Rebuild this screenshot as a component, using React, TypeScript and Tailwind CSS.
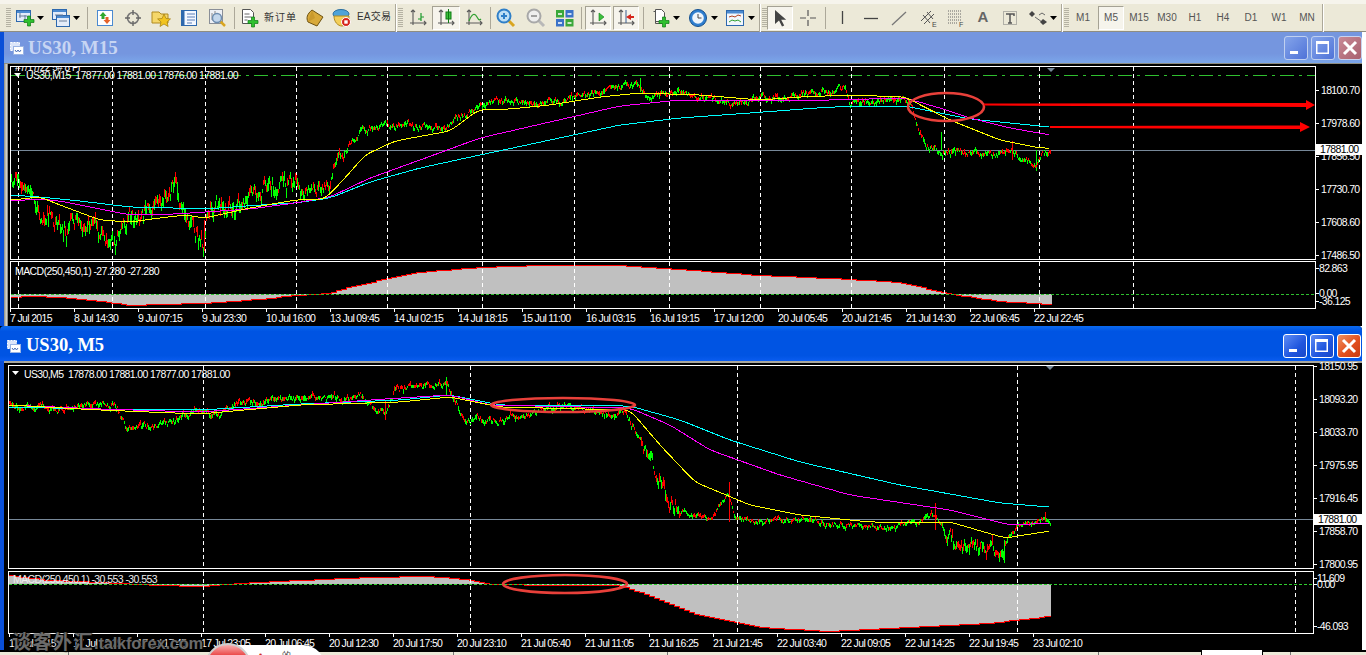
import React from "react";

type P = [number, number];

const interp = (pts: P[], x: number) => {
  if (x <= pts[0][0]) return pts[0][1];
  for (let i = 1; i < pts.length; i++) {
    if (x <= pts[i][0]) {
      const [x0, y0] = pts[i - 1];
      const [x1, y1] = pts[i];
      return y0 + ((y1 - y0) * (x - x0)) / (x1 - x0);
    }
  }
  return pts[pts.length - 1][1];
};

const rng = (seed: number) => () => {
  seed |= 0;
  seed = (seed + 0x6d2b79f5) | 0;
  let t = Math.imul(seed ^ (seed >>> 15), 1 | seed);
  t = (t + Math.imul(t ^ (t >>> 7), 61 | t)) ^ t;
  return ((t ^ (t >>> 14)) >>> 0) / 4294967296;
};

const candles = (
  path: P[],
  amp: (x: number) => number,
  seed: number,
  spikes: [number, number, number, string][]
) => {
  const r = rng(seed);
  let g = "";
  let red = "";
  let n = 0;
  for (let x = path[0][0]; x <= path[path.length - 1][0]; x++) {
    const a = amp(x);
    n = 0.72 * n + (r() - 0.5) * a;
    const c = interp(path, x) + n;
    const o = c + (r() - 0.42) * a * 0.7;
    const hi = Math.min(o, c) - r() * a * 0.3;
    const lo = Math.max(o, c) + r() * a * 0.3;
    const seg = `M${x + 0.5} ${hi.toFixed(0)}V${(lo + 1).toFixed(0)}`;
    if (c < o) g += seg;
    else red += seg;
  }
  spikes.forEach(([x, a, b, col]) => {
    const seg = `M${x + 0.5} ${a}V${b}`;
    if (col === "g") g += seg;
    else red += seg;
  });
  return { g, red };
};

const hist = (pts: P[], zero: number, step: number, end: number) => {
  let fill = `M${pts[0][0]} ${zero}`;
  let line = "";
  for (let x = pts[0][0]; x < end; x += step) {
    const nx = Math.min(x + step, end);
    const y = Math.round(interp(pts, x + step / 2));
    fill += `L${x} ${y}L${nx} ${y}`;
    line += `${line ? "L" : "M"}${x} ${y}L${nx} ${y}`;
  }
  fill += `L${end} ${zero}Z`;
  return { fill, line };
};

const smooth = (pts: P[], w: number) => {
  const out: string[] = [];
  const a = pts[0][0];
  const b = pts[pts.length - 1][0];
  for (let x = a; x <= b; x += 2) {
    let s = 0;
    let c = 0;
    for (let d = -w; d <= w; d += 2) {
      const q = Math.max(a, Math.min(b, x + d));
      s += interp(pts, q);
      c++;
    }
    out.push(`${x},${(s / c).toFixed(1)}`);
  }
  return out.join(" ");
};

const c1Path: P[] = [[11,177],[20,180],[30,190],[36,208],[50,218],[62,232],[75,222],[90,226],[105,243],[115,245],[128,228],[145,218],[160,205],[175,190],[185,212],[195,228],[204,240],[207,214],[225,205],[240,198],[260,190],[280,183],[295,178],[300,192],[315,190],[330,185],[335,160],[345,148],[360,130],[375,127],[390,124],[420,125],[445,128],[455,120],[470,108],[485,103],[500,100],[530,103],[560,100],[590,92],[625,85],[640,84],[646,95],[680,92],[700,97],[735,105],[760,98],[800,94],[845,88],[850,101],[900,100],[910,103],[918,125],[925,146],[940,150],[960,152],[1000,153],[1012,146],[1020,160],[1035,165],[1040,155],[1050,150]];
const c1Cyan: P[] = [[11,195],[40,197],[80,201],[130,207],[175,208],[205,209],[260,205],[295,203],[330,198],[370,182],[420,168],[480,155],[550,140],[620,125],[680,118],[750,113],[830,107],[905,106],[940,113],[970,119],[1010,123],[1050,127]];
const c1Mag: P[] = [[11,201],[40,199],[60,201],[90,207],[130,215],[175,214],[205,212],[250,209],[295,203],[330,197],[370,178],[420,160],[480,138],[550,122],[620,106],[680,100],[750,100],[830,100],[905,98],[940,108],[970,118],[1010,128],[1050,135]];
const c1Yel: P[] = [[11,200],[40,197],[60,205],[100,220],[130,222],[160,218],[185,215],[205,218],[250,208],[295,200],[325,199],[345,178],[365,155],[395,141],[450,131],[478,110],[510,109],[550,105],[600,97],[640,93],[700,95],[760,100],[800,97],[850,95],[905,97],[950,120],[1000,140],[1040,148],[1050,148]];
const c2Path: P[] = [[9,405],[50,408],[90,405],[115,402],[125,425],[150,428],[175,420],[195,410],[220,412],[240,403],[300,398],[360,398],[385,412],[395,390],[420,386],[445,382],[455,400],[465,420],[490,420],[520,417],[540,408],[570,406],[600,412],[625,412],[640,440],[655,470],[670,505],[690,512],[710,518],[728,495],[735,518],[760,520],[800,520],[850,525],[890,527],[920,520],[935,512],[945,530],[955,545],[985,545],[1000,553],[1008,535],[1020,525],[1045,517],[1050,520]];
const c2Cyan: P[] = [[9,407],[100,409],[200,410],[300,404],[400,400],[450,395],[500,405],[630,406],[680,420],[730,440],[800,462],[900,485],[1000,503],[1050,507]];
const c2Mag: P[] = [[9,405],[100,409],[200,412],[300,405],[400,398],[450,395],[490,405],[630,408],[670,425],[710,450],[780,475],[850,495],[950,510],[1010,525],[1050,523]];
const c2Yel: P[] = [[9,405],[100,410],[200,414],[300,405],[400,402],[450,397],[500,407],[630,410],[660,445],[695,482],[750,505],[800,515],[870,522],[950,522],[1005,538],[1050,531]];
const m1: P[] = [[11,297],[30,296],[60,297],[100,301],[130,305],[160,304],[205,303],[260,299],[296,295],[330,293],[350,287],[380,280],[420,272],[480,267],[540,265],[620,265],[680,269],[760,275],[850,279],[900,282],[935,290],[960,295],[1000,301],[1050,304]];
const m2: P[] = [[9,575],[50,580],[100,582],[160,585],[200,586],[240,583],[300,580],[370,577],[430,576],[465,579],[490,584],[560,585],[620,585],[650,595],[700,615],[760,627],[830,631],[906,627],[990,623],[1050,616]];

const c1C = candles(c1Path, (x) => (x < 300 ? 15 : x < 345 ? 10 : 5), 11, [[941,132,150,"g"],[1012,141,160,"r"],[1036,150,171,"g"],[177,182,200,"g"],[204,220,250,"r"],[640,78,92,"g"]]);
const c2C = candles(c2Path, (x) => (x > 640 && x < 680 ? 12 : x > 940 && x < 1005 ? 11 : x > 680 ? 4 : 5), 23, [[729,482,522,"r"],[935,503,530,"r"],[1004,540,563,"g"],[1045,512,522,"r"],[446,377,395,"g"],[385,400,420,"r"]]);
const h1 = hist(m1, 294, 5, 1052);
const h2 = hist(m2, 584, 5, 1051);

const ui = "font-['Liberation_Sans',Arial,sans-serif]";

const Ma = ({ pts, color, w = 8 }: { pts: P[]; color: string; w?: number }) => (
  <polyline points={smooth(pts, w)} fill="none" stroke={color} strokeWidth={1} shapeRendering="crispEdges" />
);

const Dash = ({ xs, y1, y2 }: { xs: number[]; y1: number; y2: number }) => (
  <>
    {xs.map((x) => (
      <line key={x} x1={x + 0.5} x2={x + 0.5} y1={y1} y2={y2} stroke="#fff" strokeDasharray="4 3" shapeRendering="crispEdges" />
    ))}
  </>
);

const Tag = ({ y, top, text, x = 4 }: { y: number; top: number; text: string; x?: number }) => (
  <div className="absolute flex items-center" style={{ top: y - top - 6, left: 0 }}>
    <span className="h-px w-[3px] bg-white" />
    <span className="text-[10.5px] leading-[12px] tracking-[-0.66px] text-white" style={{ marginLeft: x - 3 }}>{text}</span>
  </div>
);

const Price = ({ y, top, text }: { y: number; top: number; text: string }) => (
  <div className="absolute left-0 flex h-[11px] w-full items-center bg-white pl-[4px] text-[10.5px] tracking-[-0.66px] text-black" style={{ top: y - top - 5 }}>
    {text}
  </div>
);

const TimeRow = ({ labels, cls }: { labels: string[]; cls: string }) => (
  <div className={"flex " + cls}>
    {labels.map((l) => (
      <div key={l} className="relative w-[64px] shrink-0">
        <span className="block h-[3px] w-px bg-white" />
        <span className="block whitespace-nowrap text-[10.5px] leading-[12px] tracking-[-0.66px] text-white">{l}</span>
      </div>
    ))}
  </div>
);

const TitleBtn = ({ kind, active }: { kind: "min" | "max" | "close"; active: boolean }) => {
  const base = "flex h-[24px] w-[24px] items-center justify-center rounded-[3px] border ";
  const skin =
    kind === "close"
      ? active
        ? "border-white bg-[linear-gradient(135deg,#f0905f,#e2501f_55%,#c83a12)]"
        : "border-[#c8d4f0] bg-[linear-gradient(135deg,#c98a96,#a8606e)]"
      : active
      ? "border-white bg-[linear-gradient(135deg,#5f8df5,#1f55de_60%,#1a48c8)]"
      : "border-[#c0d0f0] bg-[linear-gradient(135deg,#84a4ea,#4f73d8)]";
  return (
    <div className={base + skin}>
      <svg width="18" height="18" viewBox="0 0 18 18">
        {kind === "min" && <rect x="3" y="12" width="8" height="3" fill="#fff" />}
        {kind === "max" && <path d="M2 2h13v13H2zM3.5 5v8.5h10V5z" fill="#fff" fillRule="evenodd" />}
        {kind === "close" && <path d="M3 3l12 12M15 3L3 15" stroke="#fff" strokeWidth="3" />}
      </svg>
    </div>
  );
};

const WinIcon = () => (
  <svg width="14" height="14" viewBox="0 0 14 14" className="shrink-0">
    <rect x="0.5" y="1.5" width="9" height="8" fill="#dce6fa" stroke="#fff" strokeDasharray="2 1" />
    <rect x="3.5" y="5.5" width="10" height="8" fill="#fff" stroke="#9ab4e4" />
    <path d="M5 9l1.5 2 1.5-2 1.5 2 1.5-2" fill="none" stroke="#4a6fb8" />
  </svg>
);

const Btn = ({ cls, active, children }: { cls: string; active?: boolean; children?: React.ReactNode }) => (
  <div
    className={
      "flex h-[24px] shrink-0 items-center justify-center " +
      cls +
      (active ? " border border-t-[#a5a294] border-l-[#a5a294] border-r-white border-b-white bg-[#f6f4ec]" : "")
    }
  >
    {children}
  </div>
);

const Sep = ({ cls }: { cls: string }) => (
  <div className={"flex h-[22px] shrink-0 justify-center " + cls}>
    <span className="w-px bg-[#aca899]" />
  </div>
);

const Grip = () => (
  <div className="h-[20px] w-[5px] shrink-0 bg-[repeating-linear-gradient(to_bottom,#b5b2a3_0,#b5b2a3_1px,#ece9d8_1px,#ece9d8_2px)]" />
);

const End = () => <div className="mx-[1px] h-[28px] w-[2px] shrink-0 border-l border-r border-l-[#aca899] border-r-white" />;

const Caret = () => (
  <svg width="7" height="4" viewBox="0 0 7 4" className="shrink-0">
    <path d="M0 0h7L3.5 4z" fill="#000" />
  </svg>
);

const Ico = ({ children }: { children: React.ReactNode }) => (
  <svg width="20" height="20" viewBox="0 0 20 20" className="shrink-0">
    {children}
  </svg>
);

const Cross = ({ x, y }: { x: number; y: number }) => (
  <path transform={`translate(${x} ${y})`} d="M3.5 0h3v3.5H10v3H6.5V10h-3V6.5H0v-3h3.5z" fill="#2fc02f" stroke="#0d7a14" strokeWidth="0.7" />
);

const Axes = ({ c = "#5a5a5a" }: { c?: string }) => (
  <path d="M5 2v15M2 15h16M3 4l2-2 2 2M16 13l2 2-2 2" fill="none" stroke={c} strokeWidth="1.1" />
);

const Win = ({ x, y, w, h }: { x: number; y: number; w: number; h: number }) => (
  <g>
    <rect x={x + 0.5} y={y + 0.5} width={w} height={h} fill="#e3ecf9" stroke="#2d68ad" />
    <rect x={x + 1} y={y + 1} width={w - 1} height="2" fill="#4b8ad0" />
  </g>
);

const Glass = ({ fill = "#bfe0f5", ring = "#2f7fc8", grip = "#d9a520" }: { fill?: string; ring?: string; grip?: string }) => (
  <>
    <path d="M12 12l6 6" stroke={grip} strokeWidth="3" />
    <circle cx="8" cy="8" r="6.5" fill={fill} stroke={ring} strokeWidth="2" />
  </>
);

const Toolbar = () => (
  <div className={"flex h-[32px] shrink-0 items-center border-t-[4px] border-b border-t-[#f6f4ec] border-b-[#8f8d80] bg-[#ece9d8] text-[#555] " + ui}>
    <div className="w-[6px] shrink-0" />
    <Grip />
    <Btn cls="w-[36px] gap-[2px]">
      <Ico><Win x={1} y={2} w={14} h={11} /><path d="M5 5v5M10 7v4M4 8h8" stroke="#6b7f99" fill="none" /><Cross x={9} y={8} /></Ico>
      <Caret />
    </Btn>
    <Btn cls="w-[36px] gap-[2px]">
      <Ico><Win x={1} y={1} w={14} h={10} /><Win x={5} y={7} w={13} h={11} /><path d="M4 7h8M8 13h8" stroke="#6b7f99" /></Ico>
      <Caret />
    </Btn>
    <Sep cls="w-[8px]" />
    <Btn cls="w-[28px]">
      <Ico><rect x="2.5" y="2.5" width="15" height="15" fill="#fff" stroke="#4b8ad0" /><path d="M8 4l3.5 4H9.5v3h-3V8H4.5z" fill="#2fa82f" /><path d="M12 16l-3.5-4h2V9h3v3h2z" fill="#e5622a" /></Ico>
    </Btn>
    <Btn cls="w-[28px]">
      <Ico><circle cx="10" cy="10" r="5.5" fill="none" stroke="#777" strokeWidth="1.6" /><path d="M10 2v5M10 13v5M2 10h5M13 10h5" stroke="#666" strokeWidth="1.4" /></Ico>
    </Btn>
    <Btn cls="w-[28px]">
      <Ico><path d="M1 4h7l2 2h7v9H1z" fill="#f5d76a" stroke="#b08a20" /><path d="M13 6l2 4.5 4.5.4-3.4 3 1 4.6-4.1-2.5-4 2.5 1-4.6-3.4-3 4.5-.4z" fill="#f2c41f" stroke="#a07c10" strokeWidth="0.7" /></Ico>
    </Btn>
    <Btn cls="w-[28px]">
      <Ico><rect x="2.5" y="2.5" width="15" height="15" fill="#f4f8ff" stroke="#2d68ad" /><rect x="2.5" y="2.5" width="3" height="15" fill="#2d68ad" /><path d="M8 6h8M8 9h8M8 12h8M8 15h5" stroke="#5b7fb8" /></Ico>
    </Btn>
    <Btn cls="w-[28px]">
      <Ico><rect x="2.5" y="1.5" width="13" height="14" fill="#edf0f5" stroke="#8a8f98" /><path d="M5 5v7h7M8 3v6" stroke="#888" fill="none" /><path d="M13 13l5 5" stroke="#d9a520" strokeWidth="2.5" /><circle cx="10" cy="10" r="4.5" fill="#c3d7ec" stroke="#6d8db0" strokeWidth="1.4" /></Ico>
    </Btn>
    <Sep cls="w-[6px]" />
    <div className="flex h-[24px] w-[64px] shrink-0 items-center gap-[5px] pl-[2px]">
      <Ico><path d="M3.5 1.5h8l3 3v11h-11z" fill="#fff" stroke="#555" /><path d="M5.5 6h5M5.5 9h7M5.5 12h3" stroke="#666" /><Cross x={9} y={9} /></Ico>
      <span className="mb-[3px] whitespace-nowrap font-['Noto_Sans_CJK_SC',sans-serif] text-[10px] tracking-[1px] text-[#333]">新订单</span>
    </div>
    <Btn cls="w-[28px]">
      <Ico><path d="M7 2l11 7-6 9-9-4c-2-4-1-8 4-12z" fill="#d8a93a" stroke="#6e5210" /><path d="M7 2l3 8-7 4" fill="#b98a20" opacity="0.5" /></Ico>
    </Btn>
    <div className="flex h-[24px] w-[65px] shrink-0 items-center gap-[5px] pl-[3px]">
      <Ico><ellipse cx="9" cy="6" rx="8" ry="4.5" fill="#4ea3d8" stroke="#2c6f9f" /><path d="M2 8c0 6 4 10 8 10s7-4 7-10z" fill="#f3cf5a" stroke="#b08a20" /><circle cx="14" cy="14" r="4.5" fill="#d6261c" stroke="#fff" /><rect x="12.3" y="12.3" width="3.4" height="3.4" fill="#fff" /></Ico>
      <span className="mb-[3px] whitespace-nowrap font-['Liberation_Sans','Noto_Sans_CJK_SC',sans-serif] text-[10px] tracking-[0.2px] text-[#333]">EA交易</span>
    </div>
    <End />
    <Grip />
    <Btn cls="w-[28px] ml-[1px]"><Ico><Axes /><path d="M13 5v8M13 9h3M13 11h-3" stroke="#1a9a2a" strokeWidth="1.2" fill="none" /></Ico></Btn>
    <Btn cls="w-[28px]" active><Ico><Axes /><rect x="10" y="4" width="5" height="7" fill="#3cc03c" stroke="#0d7a14" /><path d="M12.5 1v14" stroke="#0d7a14" /></Ico></Btn>
    <Btn cls="w-[28px]"><Ico><Axes /><path d="M5 13c3-8 6-8 8-4s3 3 4 2" fill="none" stroke="#2fa02f" strokeWidth="1.2" /></Ico></Btn>
    <Sep cls="w-[4px]" />
    <Btn cls="w-[28px]"><Ico><Glass /><path d="M5 8h6M8 5v6" stroke="#2f7fc8" strokeWidth="2" /></Ico></Btn>
    <Btn cls="w-[31px]"><Ico><Glass fill="#eeeeee" ring="#a8a8a8" grip="#b8b8b8" /><path d="M5 8h6" stroke="#a0a0a0" strokeWidth="2" /></Ico></Btn>
    <Btn cls="w-[27px]"><Ico><rect x="1" y="2" width="8" height="7.5" fill="#3aa83a" /><rect x="10.5" y="2" width="8" height="7.5" fill="#3a72c8" /><rect x="1" y="11" width="8" height="7.5" fill="#3a72c8" /><rect x="10.5" y="11" width="8" height="7.5" fill="#3aa83a" /><path d="M3 6h4M12.5 6h4M3 15h4M12.5 15h4" stroke="#fff" strokeWidth="1.6" /></Ico></Btn>
    <Sep cls="w-[6px]" />
    <Btn cls="w-[26px] mx-[1px]" active><Ico><Axes /><path d="M11 5l5 4-5 4z" fill="#3cc03c" stroke="#0d7a14" strokeWidth="0.6" /></Ico></Btn>
    <Btn cls="w-[26px] mx-[1px]" active><Ico><Axes /><path d="M10 2v13" stroke="#3a5f90" /><path d="M10 9l5-3v2h3v2h-3v2z" fill="#d6261c" /></Ico></Btn>
    <Sep cls="w-[6px]" />
    <Btn cls="w-[38px] gap-[3px] pr-[1px]">
      <Ico><path d="M5.5 1.5h6l3 3v9h-9z" fill="#fff" stroke="#555" /><path d="M3.5 3.5h2v12h7" fill="none" stroke="#555" /><Cross x={9} y={9} /></Ico>
      <Caret />
    </Btn>
    <Btn cls="w-[38px] gap-[3px] pr-[1px]">
      <Ico><circle cx="10" cy="10" r="8.5" fill="#2f7fd0" stroke="#15508f" /><circle cx="10" cy="10" r="5.8" fill="#eef5fc" /><path d="M10 6v4h3.5" stroke="#444" fill="none" /></Ico>
      <Caret />
    </Btn>
    <Btn cls="w-[36px] gap-[3px]">
      <Ico><rect x="1.5" y="2.5" width="17" height="15" fill="#f2f6fc" stroke="#2d68ad" /><rect x="2" y="3" width="16" height="2.5" fill="#4b8ad0" /><path d="M4 9l3-1 3 1 3-2 3 1" fill="none" stroke="#b04020" /><path d="M4 14l3-2 3 1 3-1 3 2" fill="none" stroke="#2fa02f" /></Ico>
      <Caret />
    </Btn>
    <End />
    <Grip />
    <Btn cls="w-[26px] mr-[1px]" active><Ico><path d="M5 2v14l4-3.5 3 6 2.2-1-3-5.8h5z" fill="#444" /></Ico></Btn>
    <Btn cls="w-[28px]"><Ico><path d="M10 2v6M10 12v6M2 10h6M12 10h6" stroke="#555" strokeWidth="1.2" /></Ico></Btn>
    <Sep cls="w-[6px]" />
    <Btn cls="w-[28px]"><Ico><path d="M10.5 3v13" stroke="#444" strokeWidth="1.3" /></Ico></Btn>
    <Btn cls="w-[29px]"><Ico><path d="M3 10.5h14" stroke="#444" strokeWidth="1.3" /></Ico></Btn>
    <Btn cls="w-[28px]"><Ico><path d="M3 17L17 4" stroke="#777" strokeWidth="1.3" /></Ico></Btn>
    <Btn cls="w-[29px]"><Ico><path d="M3 13L13 3M6 16L16 6M5 7l7 8M9 4l6 7" stroke="#555" fill="none" /><text x="14" y="19" fontSize="7" fill="#444" fontFamily="Liberation Sans">E</text></Ico></Btn>
    <Btn cls="w-[28px]"><Ico><path d="M2 3h13M2 6h13M2 9h13M2 12h13M2 15h9" stroke="#666" strokeDasharray="1 1" /><text x="13" y="19" fontSize="7" fill="#444" fontFamily="Liberation Sans">F</text></Ico></Btn>
    <Btn cls="w-[26px]"><span className="text-[15px] font-bold text-[#666]">A</span></Btn>
    <Btn cls="w-[28px]"><Ico><rect x="3.5" y="3.5" width="13" height="13" fill="none" stroke="#777" strokeDasharray="1 1" /><path d="M6 6h8v2M10 6v9M8 15h4" fill="none" stroke="#555" strokeWidth="1.5" /></Ico></Btn>
    <Btn cls="w-[36px] gap-[2px]">
      <Ico><path d="M4 3l3 3-3 3-3-3z" fill="#444" /><path d="M7 9l7 5" stroke="#666" /><path d="M15 11l4 3-4 3-3-3z" fill="#444" /><path d="M11 7l3-2 3 2" fill="none" stroke="#666" /></Ico>
      <Caret />
    </Btn>
    <End />
    <Grip />
    {["M1", "M5", "M15", "M30", "H1", "H4", "D1", "W1", "MN"].map((m) => (
      <Btn key={m} cls={m === "M5" ? "w-[26px] mx-[1px]" : "w-[28px]"} active={m === "M5"}>
        <span className="text-[10px] text-[#555]">{m}</span>
      </Btn>
    ))}
    <End />
  </div>
);

const tabs = [68, 260, 453, 667, 1098, 1290];

export default function App() {
  return (
    <div className={"relative flex h-[655px] w-[1366px] flex-col overflow-hidden bg-white " + ui}>
      <Toolbar />

      {/* Inactive chart window */}
      <div className="flex h-[294px] w-[1362px] shrink-0 bg-[#0a4fd8]">
        <div className="w-[4px] shrink-0" />
        <div className="flex min-w-0 flex-1 flex-col">
          <div className="flex h-[31px] shrink-0 items-center justify-between bg-[linear-gradient(to_bottom,#7596df,#7596df_70%,#7ba6ea)] pl-[6px]">
            <div className="flex items-center gap-[4px]">
              <WinIcon />
              <span className="font-['Liberation_Serif',serif] text-[19px] font-bold leading-none text-[#c7d5f3]">US30, M15</span>
            </div>
            <div className="flex gap-[3px]">
              <TitleBtn kind="min" active={false} />
              <TitleBtn kind="max" active={false} />
              <TitleBtn kind="close" active={false} />
            </div>
          </div>
          <div className="flex min-h-0 flex-1 border-t border-t-[#8f8d80] bg-black">
            <div className="w-[4px] shrink-0 bg-[linear-gradient(to_right,#8a8a80,#d8d6cc_60%,#6e6e68)]" />
            <div className="min-w-0 flex-1 pl-[2px] pt-[2px]">
              <div className="flex">
                <div className="relative h-[194px] w-[1306px] shrink-0 overflow-hidden border border-white">
                  <svg width="1304" height="192" viewBox="11 67 1304 192" className="block">
                    <line x1="11" x2="1315" y1="75.5" y2="75.5" stroke="#2fbf2f" strokeDasharray="14 5 3 5" shapeRendering="crispEdges" />
                    <line x1="11" x2="1315" y1="150.5" y2="150.5" stroke="#778899" shapeRendering="crispEdges" />
                    <Dash xs={[18, 112, 205, 296, 387, 482, 574, 669, 760, 851, 944, 1039, 1133]} y1={67} y2={259} />
                    <path d={c1C.g} stroke="#00ff00" fill="none" shapeRendering="crispEdges" />
                    <path d={c1C.red} stroke="#ff0000" fill="none" shapeRendering="crispEdges" />
                    <Ma pts={c1Cyan} color="#00ffff" />
                    <Ma pts={c1Mag} color="#ff00ff" />
                    <Ma pts={c1Yel} color="#ffff00" w={6} />
                    <path d="M1047 68h8l-4 4z" fill="#778899" />
                    <path d="M14 73h7l-3.5 4z" fill="#fff" />
                    <ellipse cx="946" cy="107" rx="38" ry="14" fill="none" stroke="#e8403a" strokeWidth="2.6" />
                    <path d="M984 103.5L1306 103V100L1315 105L1306 110V107L984 105.5Z" fill="#ff0000" />
                    <path d="M1050 126L1300 125.5V122L1310 127L1300 132V129L1050 128Z" fill="#ff0000" />
                  </svg>
                  <div className="absolute left-[4px] top-[-5px] whitespace-nowrap text-[10px] leading-[12px] tracking-[-0.5px] text-white">#7/17/22 5# 8 Pl</div>
                  <div className="absolute left-[15px] top-[2px] whitespace-nowrap text-[10.5px] leading-[12px] tracking-[-0.61px] text-white">US30,M15&nbsp; 17877.00 17881.00 17876.00 17881.00</div>
                </div>
                <div className="relative h-[194px] flex-1">
                  <Tag y={90} top={66} text="18100.70" x={5} />
                  <Tag y={123} top={66} text="17978.60" x={5} />
                  <Tag y={156} top={66} text="17856.50" x={5} />
                  <Tag y={189} top={66} text="17730.70" x={5} />
                  <Tag y={222} top={66} text="17608.60" x={5} />
                  <Tag y={255} top={66} text="17486.50" x={5} />
                  <Price y={149} top={66} text="17881.00" />
                </div>
              </div>
              <div className="mt-[1px] flex">
                <div className="relative h-[48px] w-[1306px] shrink-0 border border-white">
                  <svg width="1304" height="46" viewBox="11 262 1304 46" className="block">
                    <path d={h1.fill} fill="#c0c0c0" shapeRendering="crispEdges" />
                    <path d={h1.line} fill="none" stroke="#ff0000" strokeWidth="1" shapeRendering="crispEdges" />
                    <line x1="11" x2="1315" y1="294.5" y2="294.5" stroke="#2fbf2f" strokeDasharray="3 2" shapeRendering="crispEdges" />
                    <Dash xs={[18, 112, 205, 296, 387, 482, 574, 669, 760, 851, 944, 1039, 1133]} y1={262} y2={308} />
                  </svg>
                  <div className="absolute left-[4px] top-[3px] whitespace-nowrap text-[10.5px] leading-[12px] tracking-[-0.57px] text-white">MACD(250,450,1) -27.280 -27.280</div>
                </div>
                <div className="relative h-[48px] flex-1">
                  <Tag y={268} top={261} text="82.863" x={3} />
                  <Tag y={293} top={261} text="0.00" x={3} />
                  <Tag y={301} top={261} text="-36.125" x={3} />
                </div>
              </div>
              <TimeRow
                cls="h-[17px] overflow-hidden"
                labels={["7 Jul 2015","8 Jul 14:30","9 Jul 07:15","9 Jul 23:30","10 Jul 16:00","13 Jul 09:45","14 Jul 02:15","14 Jul 18:15","15 Jul 11:00","16 Jul 03:15","16 Jul 19:15","17 Jul 12:00","20 Jul 05:45","20 Jul 21:45","21 Jul 14:30","22 Jul 06:45","22 Jul 22:45"]}
              />
            </div>
          </div>
        </div>
      </div>

      {/* Active chart window */}
      <div className="flex h-[324px] w-[1362px] shrink-0 flex-col rounded-tr-[4px] bg-black">
        <div className="flex h-[35px] shrink-0 items-center justify-between rounded-t-[4px] bg-[linear-gradient(to_bottom,#0a6af0,#0054e3_15%,#0054e3_85%,#0a5cf0)] pl-[7px] pr-[1px] pt-[4px]">
          <div className="flex items-center gap-[5px]">
            <WinIcon />
            <span className="font-['Liberation_Serif',serif] text-[18.5px] font-bold leading-none text-white">US30, M5</span>
          </div>
          <div className="flex gap-[3px]">
            <TitleBtn kind="min" active />
            <TitleBtn kind="max" active />
            <TitleBtn kind="close" active />
          </div>
        </div>
        <div className="flex min-h-0 flex-1">
          <div className="w-[4px] shrink-0 bg-[#0a4fd8]" />
          <div className="min-w-0 flex-1 border-t-[2px] border-t-[#a8a69c] pl-[4px] pt-[2px]">
            <div className="flex">
              <div className="relative h-[204px] w-[1306px] shrink-0 overflow-hidden border border-white">
                <svg width="1304" height="202" viewBox="9 366 1304 202" className="block">
                  <line x1="9" x2="1313" y1="519.5" y2="519.5" stroke="#778899" shapeRendering="crispEdges" />
                  <Dash xs={[203, 470, 737, 1017, 1295]} y1={366} y2={568} />
                  <path d={c2C.g} stroke="#00ff00" fill="none" shapeRendering="crispEdges" />
                  <path d={c2C.red} stroke="#ff0000" fill="none" shapeRendering="crispEdges" />
                  <Ma pts={c2Cyan} color="#00ffff" />
                  <Ma pts={c2Mag} color="#ff00ff" />
                  <Ma pts={c2Yel} color="#ffff00" w={6} />
                  <path d="M1046 366h8l-4 4z" fill="#778899" />
                  <path d="M12 371h7l-3.5 4z" fill="#fff" />
                  <ellipse cx="563" cy="405" rx="72" ry="7" fill="none" stroke="#e8403a" strokeWidth="2.6" />
                </svg>
                <div className="absolute left-[15px] top-[2px] whitespace-nowrap text-[10.5px] leading-[12px] tracking-[-0.63px] text-white">US30,M5&nbsp; 17878.00 17881.00 17877.00 17881.00</div>
              </div>
              <div className="relative h-[204px] flex-1">
                <Tag y={366} top={365} text="18150.95" x={5} />
                <Tag y={399} top={365} text="18093.20" x={5} />
                <Tag y={432} top={365} text="18033.70" x={5} />
                <Tag y={465} top={365} text="17975.95" x={5} />
                <Tag y={498} top={365} text="17916.45" x={5} />
                <Tag y={531} top={365} text="17858.70" x={5} />
                <Tag y={564} top={365} text="17800.95" x={5} />
                <Price y={519} top={365} text="17881.00" />
              </div>
            </div>
            <div className="mt-[2px] flex">
              <div className="relative h-[63px] w-[1306px] shrink-0 border border-white">
                <svg width="1304" height="61" viewBox="9 572 1304 61" className="block">
                  <path d={h2.fill} fill="#c0c0c0" shapeRendering="crispEdges" />
                  <path d={h2.line} fill="none" stroke="#ff0000" strokeWidth="1" shapeRendering="crispEdges" />
                  <line x1="9" x2="1313" y1="584.5" y2="584.5" stroke="#2fd02f" strokeDasharray="3 2" shapeRendering="crispEdges" />
                  <Dash xs={[203, 470, 737, 1017, 1295]} y1={572} y2={633} />
                  <ellipse cx="565" cy="584" rx="62" ry="9" fill="none" stroke="#e8403a" strokeWidth="2.6" />
                </svg>
                <div className="absolute left-[4px] top-[1px] whitespace-nowrap text-[10.5px] leading-[12px] tracking-[-0.57px] text-[#eee]">MACD(250,450,1) -30.553 -30.553</div>
              </div>
              <div className="relative h-[63px] flex-1">
                <Tag y={578} top={571} text="11.609" x={3} />
                <Tag y={584} top={571} text="0.00" x={3} />
                <Tag y={626} top={571} text="-46.093" x={3} />
              </div>
            </div>
            <TimeRow
              cls="ml-[1px] h-[16px] overflow-hidden"
              labels={["17 Jul 2015","17 Jul 12:25","17 Jul 17:45","17 Jul 23:05","20 Jul 06:45","20 Jul 12:30","20 Jul 17:50","20 Jul 23:10","21 Jul 05:40","21 Jul 11:05","21 Jul 16:25","21 Jul 21:45","22 Jul 03:40","22 Jul 09:05","22 Jul 14:25","22 Jul 19:45","23 Jul 02:10"]}
            />
          </div>
        </div>
      </div>

      {/* Bottom tab strip */}
      <div className="relative h-[5px] flex-1 border-t-[2px] border-t-black bg-[#ece9d8]">
        {tabs.map((x) => (
          <span key={x} className="absolute top-0 h-[3px] w-px bg-[#777]" style={{ left: x }} />
        ))}
        <span className="absolute left-[1201px] top-[-2px] h-[7px] w-[62px] border-l border-r border-black bg-white" />
      </div>

      {/* Overlays from the capture: watermark and balloon */}
      <div className="absolute left-[12px] top-[630px] flex items-baseline whitespace-nowrap text-[#6a6a6a] [text-shadow:0_0_2px_#000,0_0_2px_#000,1px_1px_1px_#000]">
        <span className="font-['Noto_Sans_CJK_SC',sans-serif] text-[19px] font-bold leading-[22px] tracking-[1.5px]">谈客外汇</span>
        <span className="text-[16.5px] font-bold leading-[22px] tracking-[-0.2px]">.talkforex.com</span>
      </div>
      <div className="absolute left-[207px] top-[645px] h-[30px] w-[118px] rounded-t-[22px] bg-white pl-[52px] pt-[6px]">
        <span className="block text-[9px] leading-[9px] text-[#444]"><span className="text-[#d03020]">•</span>&nbsp;&nbsp;&nbsp;&nbsp;&nbsp;&nbsp;&nbsp;&nbsp;的</span>
      </div>
      <div className="absolute left-[205px] top-[643px] h-[46px] w-[46px] rounded-full border-[2px] border-[#cfcfcf] bg-[linear-gradient(to_bottom,#f8b0b0,#e83030_30%,#c81818)]" />
    </div>
  );
}
